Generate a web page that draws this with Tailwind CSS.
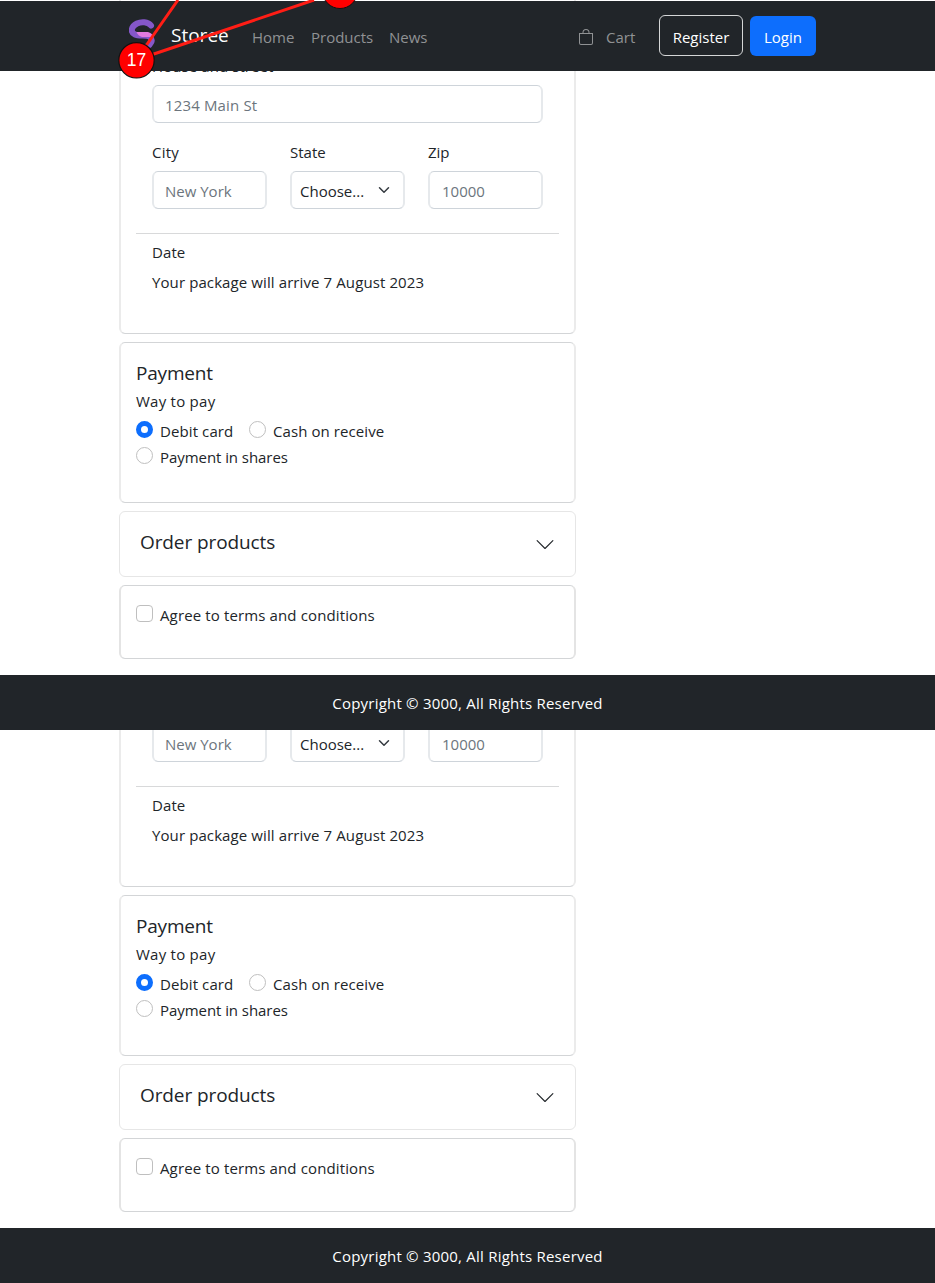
<!DOCTYPE html>
<html lang="en">
<head>
<meta charset="utf-8">
<title>Storee</title>
<script src="https://cdn.jsdelivr.net/npm/@tailwindcss/browser@4"></script>
</head>
<body class="bg-white text-[#212529] font-['Open_Sans','Noto_Sans',sans-serif] text-[15px] leading-6 w-[935px] h-[1283px] overflow-hidden">

<section class="relative h-[730px] flex flex-col overflow-hidden">
  <header class="absolute z-10 top-px inset-x-0 h-[70px] bg-[#212529] flex items-center pl-[129px] pr-[119px]">
    <svg class="w-7 h-[30px] -mt-1 shrink-0" viewBox="0 0 28 30" fill="none">
      <path d="M22 6.500C19 2.500 12 2.500 8 4.500C2 7.500 1 13 6 15.500C10 17.500 18 15.500 21 18C24.500 21 22 26 17 28" stroke="#8557c9" stroke-width="6" stroke-linecap="round"/>
      <path d="M7.500 13H19Q23 14 24.500 18H13Q9 17 7.500 13Z" fill="#e27be0"/>
    </svg>
    <span class="ml-[14px] -mt-[2px] w-[57px] text-[19px] text-white whitespace-nowrap">Storee</span>
    <nav class="ml-6 mt-[2px] flex gap-4 text-[#909294] whitespace-nowrap">
      <span class="w-[43px]">Home</span><span class="w-[62px]">Products</span><span class="w-[39px]">News</span>
    </nav>
    <div class="ml-auto flex items-center whitespace-nowrap">
      <svg class="w-4 h-4 mr-3 mt-[2px] text-[#909294]" viewBox="0 0 16 16" fill="currentColor"><path d="M8 1a2.500 2.500 0 0 1 2.500 2.500V4h-5v-.5A2.500 2.500 0 0 1 8 1zm3.500 3v-.5a3.500 3.500 0 1 0-7 0V4H1v10a2 2 0 0 0 2 2h10a2 2 0 0 0 2-2V4h-3.500zM2 5h12v9a1 1 0 0 1-1 1H3a1 1 0 0 1-1-1V5z"/></svg>
      <span class="w-[30px] mt-[2px] text-[#909294]">Cart</span>
      <span class="ml-[23px] w-[84px] h-[41px] -mt-px border border-[#d5d6d7] rounded-md text-white flex items-center justify-center pt-[2px]">Register</span>
      <span class="ml-[7px] w-[66px] h-10 rounded-md bg-[#0d6efd] text-white flex items-center justify-center pt-px">Login</span>
    </div>
  </header>

  <svg class="absolute z-20 left-0 top-0 w-[400px] h-20" viewBox="0 0 400 80">
    <path d="M178 0L136 60L314 0" fill="none" stroke="#ff1d15" stroke-width="3"/>
    <circle cx="340" cy="-9" r="17.500" fill="#f00" stroke="#111" stroke-width="1"/>
    <circle cx="136.500" cy="60.300" r="17.700" fill="#f00" stroke="#111" stroke-width="1.200"/>
    <text x="136.500" y="65.500" text-anchor="middle" font-family="Liberation Sans, sans-serif" font-size="17.500" fill="#fff">17</text>
  </svg>

  <main class="ml-[119px] w-[457px] flex-1 flex flex-col gap-2">
    <div class="h-[334px] border-b border-b-[#d3d5d7] border-x-2 border-x-[#ebebeb] rounded-b-md px-[15px] pt-[54px]">
      <div class="px-4">
        <div class="tracking-[.08px]">House and street</div>
        <div class="mt-[7px] w-[391px] h-[38px] rounded-md border-y border-x-2 border-y-[#ced4da] border-x-[#e6e9ec] pl-[11px] pt-[7px] tracking-[.15px] text-[#6c757d]">1234 Main St</div>
        <div class="mt-[17px] grid grid-cols-[115px_115px_115px] gap-x-[23px] gap-y-[7px]">
          <div class="tracking-[.2px]">City</div><div>State</div><div>Zip</div>
          <div class="h-[38px] rounded-md border-y border-x-2 border-y-[#ced4da] border-x-[#e6e9ec] pl-[11px] pt-[7px] text-[#6c757d]">New York</div>
          <div class="h-[38px] rounded-md border-y border-x-2 border-y-[#ced4da] border-x-[#e6e9ec] pl-2 pr-[13px] pt-[7px] flex justify-between"><span>Choose...</span><svg class="w-3 h-3 mt-[5px]" viewBox="0 0 16 16" fill="none" stroke="#343a40" stroke-width="2" stroke-linecap="round" stroke-linejoin="round"><path d="m2 5 6 6 6-6"/></svg></div>
          <div class="h-[38px] rounded-md border-y border-x-2 border-y-[#ced4da] border-x-[#e6e9ec] pl-3 pt-[7px] text-[#6c757d]">10000</div>
        </div>
      </div>
      <div class="mt-6 h-px bg-[#d8d9da]"></div>
      <div class="px-4 pt-[6px]">
        <div class="tracking-[.1px]">Date</div>
        <div class="mt-[6px] tracking-[.1px]">Your package will arrive 7 August 2023</div>
      </div>
    </div>

    <div class="h-[161px] border-y border-y-[#d3d5d7] border-x-2 border-x-[#ebebeb] rounded-md px-[15px] pt-[18px]">
      <div class="text-[19px] tracking-[-.2px]">Payment</div>
      <div class="mt-1 tracking-[.25px]">Way to pay</div>
      <div class="mt-[6px] flex">
        <span class="mt-[2px] w-[17px] h-[17px] rounded-full border-[5px] border-[#0d6efd] mr-[7px]"></span><span class="w-[73px] tracking-[.1px] whitespace-nowrap">Debit card</span>
        <span class="mt-[2px] w-[17px] h-[17px] rounded-full border border-[#bfbfbf] ml-4 mr-[7px]"></span><span class="tracking-[.08px]">Cash on receive</span>
      </div>
      <div class="mt-[2px] flex"><span class="mt-[2px] w-[17px] h-[17px] rounded-full border border-[#bfbfbf] mr-[7px]"></span><span class="tracking-[-.06px]">Payment in shares</span></div>
    </div>

    <div class="h-[66px] border border-[#e6e6e6] rounded-md pl-5 pr-[21px] flex justify-between items-center">
      <span class="text-[19px] tracking-[-.1px] -mt-1">Order products</span>
      <svg class="w-[18px] h-[18px] -mt-px" viewBox="0 0 16 16" fill="none" stroke="#212529" stroke-linecap="round" stroke-linejoin="round"><path d="m1 5 7 7 7-7"/></svg>
    </div>

    <div class="h-[74px] border-y border-y-[#d3d5d7] border-x-2 border-x-[#e4e4e4] rounded-md px-[15px] pt-[17px] flex">
      <span class="mt-[2px] w-[17px] h-[17px] rounded border border-[#bfbfbf] mr-[7px]"></span><span class="tracking-[.13px]">Agree to terms and conditions</span>
    </div>
  </main>

  <footer class="h-[55px] bg-[#212529] text-white text-center pt-4 tracking-[.22px]">Copyright © 3000, All Rights Reserved</footer>
</section>

<section class="h-[553px] flex flex-col overflow-hidden">
  <main class="ml-[119px] w-[457px] flex-1 flex flex-col gap-2">
    <div class="h-[157px] border-b border-b-[#d3d5d7] border-x-2 border-x-[#ebebeb] rounded-b-md px-[15px]">
      <div class="px-4 grid grid-cols-[115px_115px_115px] gap-x-[23px]">
        <div class="h-8 rounded-b-md border-b border-x-2 border-b-[#ced4da] border-x-[#e6e9ec] pl-[11px] pt-[2px] text-[#6c757d]">New York</div>
        <div class="h-8 rounded-b-md border-b border-x-2 border-b-[#ced4da] border-x-[#e6e9ec] pl-2 pr-[13px] pt-[2px] flex justify-between"><span>Choose...</span><svg class="w-3 h-3 mt-[5px]" viewBox="0 0 16 16" fill="none" stroke="#343a40" stroke-width="2" stroke-linecap="round" stroke-linejoin="round"><path d="m2 5 6 6 6-6"/></svg></div>
        <div class="h-8 rounded-b-md border-b border-x-2 border-b-[#ced4da] border-x-[#e6e9ec] pl-3 pt-[2px] text-[#6c757d]">10000</div>
      </div>
      <div class="mt-6 h-px bg-[#d8d9da]"></div>
      <div class="px-4 pt-[6px]">
        <div class="tracking-[.1px]">Date</div>
        <div class="mt-[6px] tracking-[.1px]">Your package will arrive 7 August 2023</div>
      </div>
    </div>

    <div class="h-[161px] border-y border-y-[#d3d5d7] border-x-2 border-x-[#ebebeb] rounded-md px-[15px] pt-[18px]">
      <div class="text-[19px] tracking-[-.2px]">Payment</div>
      <div class="mt-1 tracking-[.25px]">Way to pay</div>
      <div class="mt-[6px] flex">
        <span class="mt-[2px] w-[17px] h-[17px] rounded-full border-[5px] border-[#0d6efd] mr-[7px]"></span><span class="w-[73px] tracking-[.1px] whitespace-nowrap">Debit card</span>
        <span class="mt-[2px] w-[17px] h-[17px] rounded-full border border-[#bfbfbf] ml-4 mr-[7px]"></span><span class="tracking-[.08px]">Cash on receive</span>
      </div>
      <div class="mt-[2px] flex"><span class="mt-[2px] w-[17px] h-[17px] rounded-full border border-[#bfbfbf] mr-[7px]"></span><span class="tracking-[-.06px]">Payment in shares</span></div>
    </div>

    <div class="h-[66px] border border-[#e6e6e6] rounded-md pl-5 pr-[21px] flex justify-between items-center">
      <span class="text-[19px] tracking-[-.1px] -mt-1">Order products</span>
      <svg class="w-[18px] h-[18px] -mt-px" viewBox="0 0 16 16" fill="none" stroke="#212529" stroke-linecap="round" stroke-linejoin="round"><path d="m1 5 7 7 7-7"/></svg>
    </div>

    <div class="h-[74px] border-y border-y-[#d3d5d7] border-x-2 border-x-[#e4e4e4] rounded-md px-[15px] pt-[17px] flex">
      <span class="mt-[2px] w-[17px] h-[17px] rounded border border-[#bfbfbf] mr-[7px]"></span><span class="tracking-[.13px]">Agree to terms and conditions</span>
    </div>
  </main>
  <footer class="h-[55px] bg-[#212529] text-white text-center pt-4 tracking-[.22px]">Copyright © 3000, All Rights Reserved</footer>
</section>
</body>
</html>
